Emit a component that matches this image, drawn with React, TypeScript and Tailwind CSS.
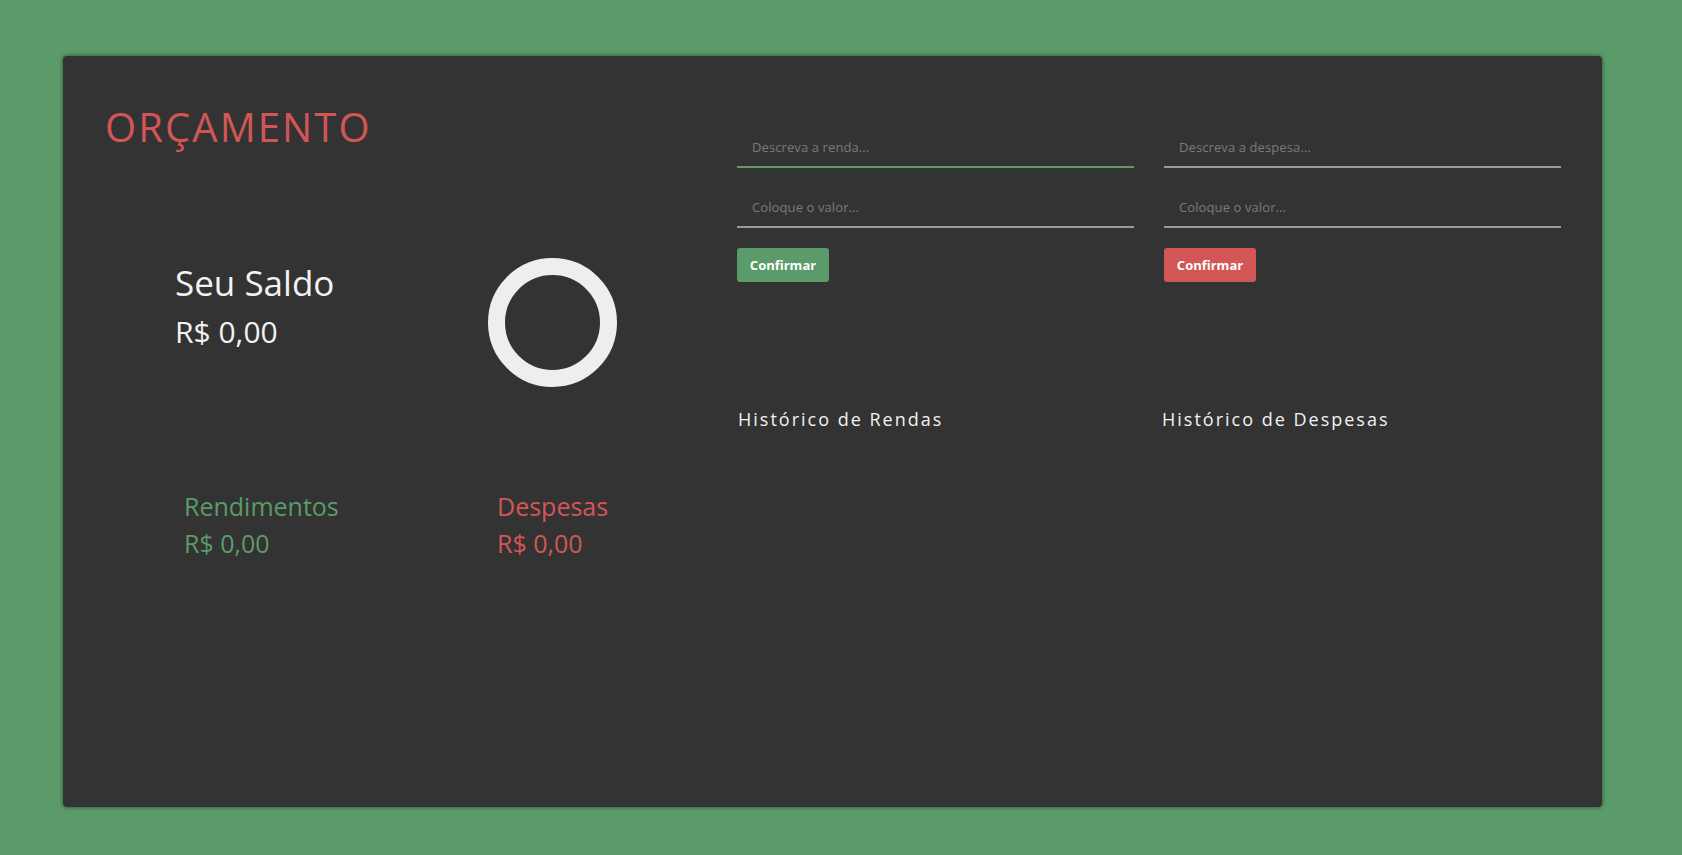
import { useState } from "react";

const brl = (v: number) =>
  "R$ " + v.toFixed(2).replace(".", ",");

function EntryForm({
  descPlaceholder,
  accent,
  focused,
}: {
  descPlaceholder: string;
  accent: "green" | "red";
  focused?: boolean;
}) {
  const [desc, setDesc] = useState("");
  const [value, setValue] = useState("");

  return (
    <div className="flex w-[397px] flex-col">
      <input
        value={desc}
        onChange={(e) => setDesc(e.target.value)}
        placeholder={descPlaceholder}
        className={`h-[40px] w-full border-b-2 bg-transparent px-[15px] text-[13px] tracking-[0.1px] text-white outline-none placeholder:text-[#7b7b7b] ${
          focused ? "border-[#5b9b69]" : "border-[#9a9a9a]"
        }`}
      />
      <input
        value={value}
        onChange={(e) => setValue(e.target.value)}
        placeholder="Coloque o valor..."
        className="mt-[20px] h-[40px] w-full border-b-2 border-[#9a9a9a] bg-transparent px-[15px] text-[13px] tracking-[0.1px] text-white outline-none placeholder:text-[#7b7b7b]"
      />
      <button
        className={`mt-[20px] h-[34px] w-[92px] rounded-[3px] pt-[1px] text-[13px] font-bold text-white ${
          accent === "green" ? "bg-[#5b9b69]" : "bg-[#d35656]"
        }`}
      >
        Confirmar
      </button>
    </div>
  );
}

export default function App() {
  const saldo = 0;
  const rendimentos = 0;
  const despesas = 0;

  return (
    <div className="min-h-[855px] w-full bg-[#5b9b69] pt-[56px] pl-[63px] font-['Open_Sans',sans-serif]">
      <div className="flex h-[751px] w-[1539px] rounded-[4px] bg-[#333333] shadow-[0_0_4px_rgba(0,0,0,0.55)]">
        {/* Left side: resumo */}
        <div className="flex w-[674px] flex-col pt-[44px]">
          <h1 className="pl-[42px] text-[40px] leading-[54px] tracking-[2.1px] text-[#d35656]">
            ORÇAMENTO
          </h1>

          <div className="mt-[104px] flex items-start">
            <div className="ml-[112px] mt-[1px] w-[313px] text-[#f2f2f2]">
              <p className="text-[35px] leading-[48px]">Seu Saldo</p>
              <p className="mt-[5px] text-[30px] leading-[40px]">{brl(saldo)}</p>
            </div>
            <div className="h-[129px] w-[129px] rounded-full border-[17px] border-[#eeeeee]" />
          </div>

          <div className="mt-[102px] flex">
            <div className="ml-[121px] w-[313px] text-[#5b9b69]">
              <p className="text-[25px] leading-[35px]">Rendimentos</p>
              <p className="mt-[3px] text-[25px] leading-[33px]">{brl(rendimentos)}</p>
            </div>
            <div className="text-[#d35656]">
              <p className="text-[25px] leading-[35px]">Despesas</p>
              <p className="mt-[3px] text-[25px] leading-[33px]">{brl(despesas)}</p>
            </div>
          </div>
        </div>

        {/* Right side: formulários e históricos */}
        <div className="flex flex-col pt-[72px]">
          <div className="flex gap-[30px]">
            <EntryForm descPlaceholder="Descreva a renda..." accent="green" focused />
            <EntryForm descPlaceholder="Descreva a despesa..." accent="red" />
          </div>

          <div className="mt-[125px] flex gap-[30px]">
            <h2 className="w-[397px] pl-[1px] text-[18px] leading-[25px] tracking-[2px] text-[#f2f2f2]">
              Histórico de Rendas
            </h2>
            <h2 className="w-[397px] -ml-[2px] text-[18px] leading-[25px] tracking-[2px] text-[#f2f2f2]">
              Histórico de Despesas
            </h2>
          </div>
        </div>
      </div>
    </div>
  );
}
